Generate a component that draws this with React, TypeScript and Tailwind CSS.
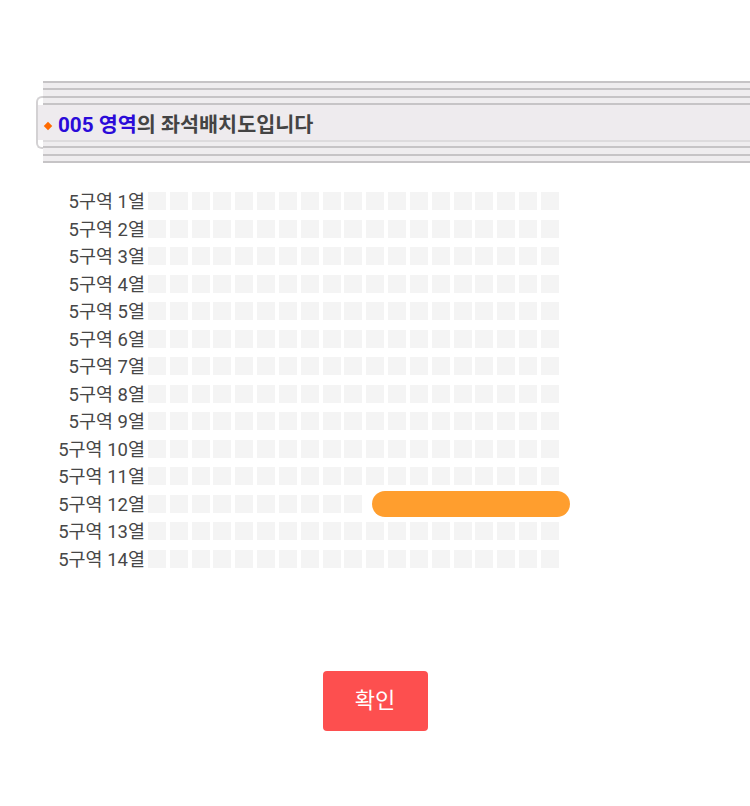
import React from "react";

const font = { fontFamily: '"Roboto", "Noto Sans CJK KR", sans-serif' };

function Line({ c = "bg-[#c6c4c6]" }: { c?: string }) {
  return <div className={`h-[2px] ${c}`} />;
}

export default function App() {
  const rows = Array.from({ length: 14 }, (_, i) => i + 1);
  const seats = Array.from({ length: 19 }, (_, i) => i);
  return (
    <div className="w-[750px] h-[806px] bg-white" style={font}>
      <div className="h-[81px]" />
      {/* header */}
      <div className="relative ml-[36px]">
        <div className="ml-[7px] bg-[#efedef] flex flex-col">
          <Line />
          <div className="h-[5px]" />
          <Line />
          <div className="h-[6px]" />
          <Line />
          <div className="h-[5px]" />
          <Line />
        </div>
        <div className="h-[35px] bg-[#eeebee] border-l-2 border-[#d3d1d3] flex items-center pt-[6px]">
          <span className="ml-[7px] mr-[7px] inline-block w-[6px] h-[6px] bg-[#ff6a00] rotate-45" />
          <span className="text-[20.7px] font-bold tracking-[0px] leading-none">
            <span className="text-[#2a0bd9]">005 영역</span>
            <span className="text-[#444444]">의 좌석배치도입니다</span>
          </span>
        </div>
        <div className="ml-[7px] bg-[#efedef] flex flex-col">
          <Line c="bg-[#dddbdd]" />
          <div className="h-[4px]" />
          <Line />
          <div className="h-[6px]" />
          <Line />
          <div className="h-[5px]" />
          <Line />
        </div>
        <div className="absolute left-0 top-[15px] w-[7px] h-[9px] border-l-2 border-t-2 border-[#d3d1d3] rounded-tl-[6px]" />
        <div className="absolute left-0 top-[59px] w-[7px] h-[9px] border-l-2 border-b-2 border-[#d3d1d3] rounded-bl-[6px]" />
      </div>

      {/* seats */}
      <div className="mt-[29px] flex flex-col gap-[9.5px]">
        {rows.map((r) => (
          <div key={r} className="flex items-center h-[18px]">
            <div className="w-[145px] pt-[2px] text-right text-[18.5px] leading-[18px] text-[#474747] whitespace-nowrap">
              5구역 {r}열
            </div>
            <div className="ml-[3px] flex items-center gap-[3.83px]">
              {r === 12 ? (
                <>
                  {seats.slice(0, 10).map((s) => (
                    <div key={s} className="w-[18px] h-[18px] bg-[#f4f4f4]" />
                  ))}
                  <div className="ml-[6px] w-[198px] h-[26px] -my-[4px] rounded-full bg-[#ff9e2e]" />
                </>
              ) : (
                seats.map((s) => <div key={s} className="w-[18px] h-[18px] bg-[#f4f4f4]" />)
              )}
            </div>
          </div>
        ))}
      </div>

      <div className="mt-[103px] flex justify-center">
        <button className="w-[105px] h-[60px] rounded-[4px] bg-[#fd4f4f] text-white text-[22px]">
          확인
        </button>
      </div>
    </div>
  );
}
